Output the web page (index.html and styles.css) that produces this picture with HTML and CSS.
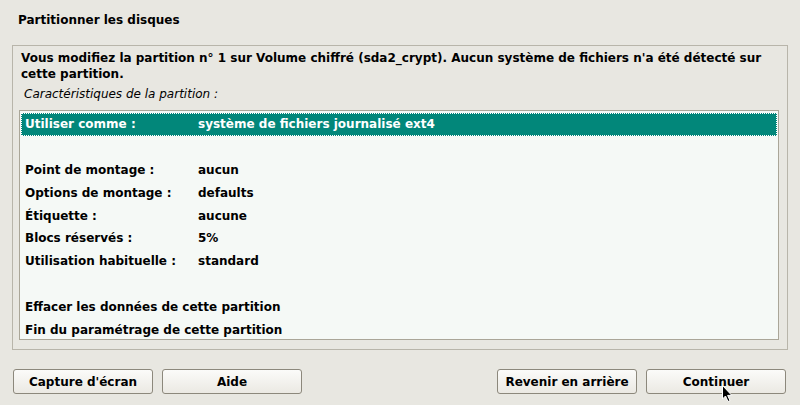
FILE: index.html
```html
<!DOCTYPE html>
<html lang="fr">
<head>
<meta charset="utf-8">
<title>Partitionner les disques</title>
<link rel="stylesheet" href="styles.css">
</head>
<body>
<div class="window">
  <h1 class="title">Partitionner les disques</h1>
  <div class="frame">
    <p class="intro">Vous modifiez la partition n° 1 sur Volume chiffré (sda2_crypt). Aucun système de fichiers n'a été détecté sur cette partition.</p>
    <p class="caption">Caractéristiques de la partition :</p>
    <div class="list">
      <div class="row selected"><span class="key">Utiliser comme :</span><span class="val">système de fichiers journalisé ext4</span></div>
      <div class="row"></div>
      <div class="row"><span class="key">Point de montage :</span><span class="val">aucun</span></div>
      <div class="row"><span class="key">Options de montage :</span><span class="val">defaults</span></div>
      <div class="row"><span class="key">Étiquette :</span><span class="val">aucune</span></div>
      <div class="row"><span class="key">Blocs réservés :</span><span class="val">5%</span></div>
      <div class="row"><span class="key">Utilisation habituelle :</span><span class="val">standard</span></div>
      <div class="row"></div>
      <div class="row"><span class="key">Effacer les données de cette partition</span></div>
      <div class="row"><span class="key">Fin du paramétrage de cette partition</span></div>
    </div>
  </div>
  <div class="buttons">
    <div class="group">
      <button class="btn">Capture d'écran</button>
      <button class="btn">Aide</button>
    </div>
    <div class="group">
      <button class="btn">Revenir en arrière</button>
      <button class="btn">Continuer</button>
    </div>
  </div>
  <svg class="cursor" width="12" height="19" viewBox="0 0 12 19"><path d="M0.5 0.5 L0.5 14 L3.5 11 L6 16.5 L8 15.6 L5.6 10.4 L9.8 10.4 Z" fill="#000" stroke="#fff" stroke-width="1"/></svg>
</div>
</body>
</html>
```
FILE: styles.css
```css
* { box-sizing: border-box; }
html, body { margin: 0; padding: 0; }
body {
  background: #e8e7e1;
  font-family: "DejaVu Sans", "Noto Sans", sans-serif;
  font-size: 12px;
  color: #000;
  width: 800px;
  height: 405px;
  overflow: hidden;
}
.window {
  position: relative;
  width: 800px;
  height: 405px;
  padding: 12px 12px 0 12px;
}
.title {
  margin: 0 0 0 6px;
  font-size: 12px;
  font-weight: bold;
  line-height: 16px;
  height: 33px;
}
.frame {
  border: 1px solid #b8b5aa;
  height: 305px;
  padding: 4px 8px 0 6px;
}
.intro {
  margin: 0;
  font-weight: bold;
  line-height: 16px;
  padding-left: 2px;
}
.caption {
  margin: 4px 0 0 5px;
  font-style: italic;
  line-height: 16px;
  height: 24px;
}
.list {
  background: #f5f9f6;
  border: 1px solid #aaa698;
  height: 230px;
  padding: 2px 1px 1px 1px;
}
.row {
  display: flex;
  height: 22.8px;
  align-items: center;
  font-weight: bold;
  padding-left: 4px;
}
.row.selected {
  background: #02877a;
  color: #fff;
  outline: 1px dotted #ffffff;
  outline-offset: -1px;
}
.key { width: 173px; flex: none; white-space: nowrap; }
.val { white-space: nowrap; }
.buttons {
  display: flex;
  justify-content: space-between;
  margin-top: 19px;
  padding: 0 2px 0 1px;
}
.group { display: flex; gap: 9px; }
.btn {
  width: 140px;
  height: 25px;
  border: 1px solid #8c887c;
  border-radius: 3px;
  background: linear-gradient(#fbfbf9, #ebe9e3);
  font-family: "DejaVu Sans", "Noto Sans", sans-serif;
  font-size: 12px;
  font-weight: bold;
  color: #000;
  padding: 0;
}
.cursor {
  position: absolute;
  left: 722px;
  top: 385px;
}
```
